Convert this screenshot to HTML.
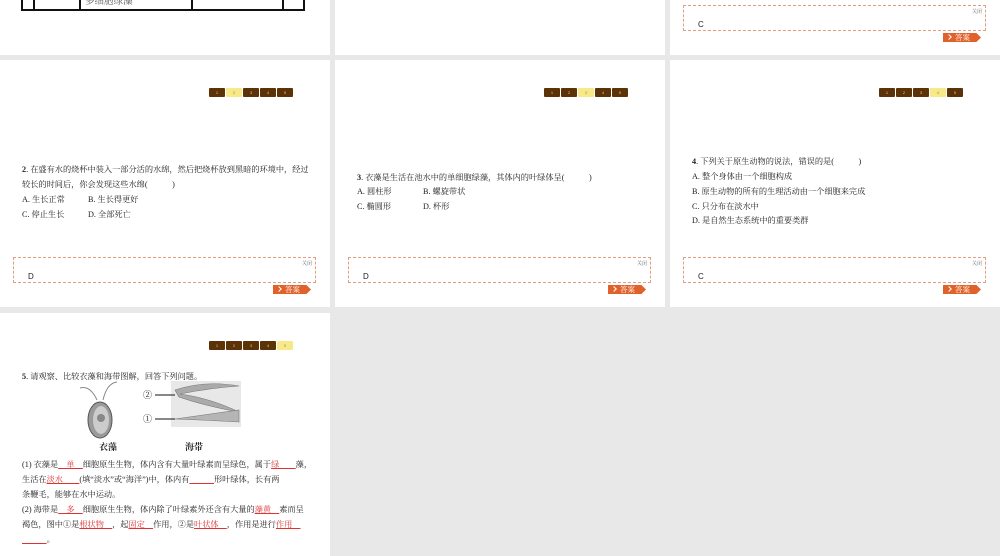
<!DOCTYPE html>
<html><head><meta charset="utf-8"><style>
*{margin:0;padding:0;box-sizing:border-box}
body{width:1000px;height:556px;background:#e8e8e8;position:relative;overflow:hidden;font-family:"Liberation Serif","Noto Serif CJK SC",serif;color:#222}
.s{position:absolute;background:#fff;width:330px}
.a{position:absolute}
.t{position:absolute;font-size:8.2px;white-space:nowrap;line-height:15px}
.nav{position:absolute;top:28px;display:flex;gap:1px}
.nav span{width:16px;height:9px;background:#5c3208;border-radius:1px;font-size:4px;color:#e8c87a;text-align:center;line-height:9px;font-family:"Liberation Sans",sans-serif}
.nav span.on{background:#f7e98a;color:#b08a2a}
.ans{position:absolute;left:13px;width:303px;height:26px;border:1px dashed #e0a080}
.ans .c{position:absolute;right:3px;top:2px;font-size:5px;color:#666}
.ans .l{position:absolute;left:14px;top:14px;font-size:8px;font-family:"Liberation Sans",sans-serif;color:#222}
.btn{position:absolute;left:273px;width:38px;height:9px;background:#e0612a;color:#fff;font-size:7.5px;line-height:9px;padding-left:12px;clip-path:polygon(0 0,88% 0,100% 50%,88% 100%,0 100%)}
.btn:before{content:"";position:absolute;left:4px;top:2px;width:3px;height:3px;border-right:1.5px solid #fff;border-top:1.5px solid #fff;transform:rotate(45deg)}
.r{color:#d33;text-decoration:underline;text-decoration-color:#d33}
</style></head><body>
<div class="s" style="left:0;top:0;height:55px">
 <div class="a" style="left:21px;top:-2px;width:284px;height:13px;border:2px solid #111;border-top:none"></div>
 <div class="a" style="left:33px;top:0;width:1.5px;height:10px;background:#111"></div>
 <div class="a" style="left:79px;top:0;width:1.5px;height:10px;background:#111"></div>
 <div class="a" style="left:191px;top:0;width:1.5px;height:10px;background:#111"></div>
 <div class="a" style="left:282px;top:0;width:1.5px;height:10px;background:#111"></div>
 <div class="t" style="left:85px;top:-5px;color:#555;font-size:9.5px">多细胞绿藻</div>
 <div class="t" style="left:196px;top:-10px;color:#777;font-size:9.5px">通常生活在水中</div>
</div>
<div class="s" style="left:335px;top:0;height:55px"></div>
<div class="s" style="left:670px;top:0;height:55px">
 <div class="ans" style="top:5px"><span class="c">关闭</span><span class="l" style="top:14px">C</span></div>
 <div class="btn" style="top:33px">答案</div>
</div>
<div class="s" style="left:0;top:60px;height:247px">
 <div class="nav" style="left:209px"><span>1</span><span class="on">2</span><span>3</span><span>4</span><span>5</span></div>
 <div class="t" style="left:22px;top:102px"><b>2</b>. 在盛有水的烧杯中装入一部分活的水绵，然后把烧杯放到黑暗的环境中，经过</div>
 <div class="t" style="left:22px;top:117px">较长的时间后，你会发现这些水绵(　　　)</div>
 <div class="t" style="left:22px;top:132px">A. 生长正常</div><div class="t" style="left:88px;top:132px">B. 生长得更好</div>
 <div class="t" style="left:22px;top:147px">C. 停止生长</div><div class="t" style="left:88px;top:147px">D. 全部死亡</div>
 <div class="ans" style="top:197px"><span class="c">关闭</span><span class="l">D</span></div>
 <div class="btn" style="top:225px">答案</div>
</div>
<div class="s" style="left:335px;top:60px;height:247px">
 <div class="nav" style="left:209px"><span>1</span><span>2</span><span class="on">3</span><span>4</span><span>5</span></div>
 <div class="t" style="left:22px;top:110px"><b>3</b>. 衣藻是生活在池水中的单细胞绿藻，其体内的叶绿体呈(　　　)</div>
 <div class="t" style="left:22px;top:124px">A. 圆柱形</div><div class="t" style="left:88px;top:124px">B. 螺旋带状</div>
 <div class="t" style="left:22px;top:139px">C. 椭圆形</div><div class="t" style="left:88px;top:139px">D. 杯形</div>
 <div class="ans" style="top:197px"><span class="c">关闭</span><span class="l">D</span></div>
 <div class="btn" style="top:225px">答案</div>
</div>
<div class="s" style="left:670px;top:60px;height:247px">
 <div class="nav" style="left:209px"><span>1</span><span>2</span><span>3</span><span class="on">4</span><span>5</span></div>
 <div class="t" style="left:22px;top:94px"><b>4</b>. 下列关于原生动物的说法，错误的是(　　　)</div>
 <div class="t" style="left:22px;top:109px">A. 整个身体由一个细胞构成</div>
 <div class="t" style="left:22px;top:124px">B. 原生动物的所有的生理活动由一个细胞来完成</div>
 <div class="t" style="left:22px;top:139px">C. 只分布在淡水中</div>
 <div class="t" style="left:22px;top:153px">D. 是自然生态系统中的重要类群</div>
 <div class="ans" style="top:197px"><span class="c">关闭</span><span class="l">C</span></div>
 <div class="btn" style="top:225px">答案</div>
</div>
<div class="s" style="left:0;top:313px;height:243px">
 <div class="nav" style="left:209px"><span>1</span><span>2</span><span>3</span><span>4</span><span class="on">5</span></div>
 <div class="t" style="left:22px;top:56px"><b>5</b>. 请观察、比较衣藻和海带图解，回答下列问题。</div>
 <svg class="a" style="left:75px;top:67px" width="175" height="75">
  <path d="M22 20 Q15 5 5 8 M28 20 Q32 3 42 2" stroke="#888" fill="none" stroke-width="1"/>
  <ellipse cx="25" cy="40" rx="12" ry="18" fill="#9a9a9a" stroke="#555"/>
  <ellipse cx="26" cy="40" rx="8" ry="14" fill="#ccc"/>
  <circle cx="26" cy="38" r="4" fill="#888"/>
  <rect x="96" y="1" width="70" height="46" fill="#e8e8e8"/>
  <path d="M100 10 Q130 0 164 6 Q135 8 105 14 Q135 18 164 32 Q130 26 104 17Z" fill="#aaa" stroke="#777" stroke-width=".6"/>
  <path d="M100 39 Q135 34 164 30 L164 42 Q130 40 100 39Z" fill="#b5b5b5" stroke="#777" stroke-width=".6"/>
  <text x="68" y="18" font-size="9" fill="#111">②</text>
  <line x1="80" y1="15" x2="100" y2="15" stroke="#111"/>
  <text x="68" y="42" font-size="9" fill="#111">①</text>
  <line x1="80" y1="39" x2="100" y2="39" stroke="#111"/>
 </svg>
 <div class="t" style="left:99px;top:127px;font-weight:bold;font-size:9px">衣藻</div>
 <div class="t" style="left:185px;top:127px;font-weight:bold;font-size:9px">海带</div>
 <div class="t" style="left:22px;top:144px">(1) 衣藻是<span class="r">　单　</span>细胞原生生物，体内含有大量叶绿素而呈绿色，属于<span class="r">绿　　</span>藻，</div>
 <div class="t" style="left:22px;top:159px">生活在<span class="r">淡水　　</span>(填“淡水”或“海洋”)中，体内有<span class="r">　　　</span>形叶绿体，长有两</div>
 <div class="t" style="left:22px;top:174px">条鞭毛，能够在水中运动。</div>
 <div class="t" style="left:22px;top:189px">(2) 海带是<span class="r">　多　</span>细胞原生生物，体内除了叶绿素外还含有大量的<span class="r">藻黄　</span>素而呈</div>
 <div class="t" style="left:22px;top:204px">褐色，图中①是<span class="r">根状物　</span>，起<span class="r">固定　</span>作用，②是<span class="r">叶状体　</span>，作用是进行<span class="r">作用　</span></div>
 <div class="t" style="left:22px;top:219px"><span class="r">　　　</span>。</div>
</div>
</body></html>
